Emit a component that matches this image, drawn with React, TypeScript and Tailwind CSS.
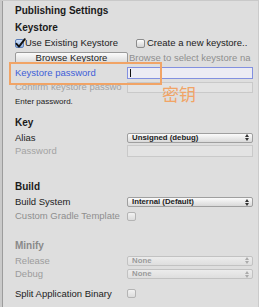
import React from "react";

const F = { fontFamily: '"Liberation Sans", Arial, sans-serif' };

function Check({ checked = false, disabled = false }: { checked?: boolean; disabled?: boolean }) {
  return (
    <div
      className={`relative w-[9px] h-[9px] rounded-[2px] border ${
        disabled ? "border-[#b4b4b4] bg-gradient-to-b from-[#f2f2f2] to-[#dcdcdc]" : checked ? "border-[#5d7fb8] bg-gradient-to-b from-[#cfe0f7] to-[#8fb2e6]" : "border-[#8c8c8c] bg-gradient-to-b from-[#fdfdfd] to-[#d3d3d3]"
      }`}
    >
      {checked && (
        <svg className="absolute left-[-1px] top-[-2px]" width="11" height="11" viewBox="0 0 11 11">
          <path d="M1.5 5.8 L4 8.6 L9.8 1.2" fill="none" stroke="#111" strokeWidth="1.9" strokeLinecap="round" strokeLinejoin="round" />
        </svg>
      )}
    </div>
  );
}

function Arrows({ c }: { c: string }) {
  return (
    <svg width="4" height="7" viewBox="0 0 4 7">
      <path d="M0 3 L2 0 L4 3 Z" fill={c} />
      <path d="M0 4 L2 7 L4 4 Z" fill={c} />
    </svg>
  );
}

function Dropdown({ text, disabled = false }: { text: string; disabled?: boolean }) {
  return (
    <div
      className={`w-[126px] h-[10px] rounded-[2px] border flex items-center justify-between pl-[4px] pr-[3px] ${
        disabled ? "border-[#c2c2c2] bg-gradient-to-b from-[#ececec] to-[#dedede]" : "border-[#9f9f9f] bg-gradient-to-b from-[#fbfbfb] to-[#d9d9d9]"
      }`}
    >
      <span className={`text-[7.8px] leading-none font-bold ${disabled ? "text-[#9a9a9a]" : "text-[#222]"}`}>{text}</span>
      <Arrows c={disabled ? "#aaa" : "#333"} />
    </div>
  );
}

function Row({ h, children, className = "" }: { h: string; children: React.ReactNode; className?: string }) {
  return <div className={`flex items-center ${h} ${className}`}>{children}</div>;
}

function Label({ children, color = "text-[#1c1c1c]" }: { children: React.ReactNode; color?: string }) {
  return <div className={`w-[112px] shrink-0 whitespace-nowrap text-[9.5px] leading-none ${color}`}>{children}</div>;
}

export default function App() {
  return (
    <div className="relative w-[259px] h-[307px] overflow-hidden bg-[#dedede]" style={F}>
      <div className="h-full border-l-2 border-[#cacaca] border-t border-t-[#c9c9c9] border-r border-r-[#cbcbcb]">
        <div className="h-full border-l border-[#9c9c9c] pl-[12px] pt-[3px] flex flex-col">
          <Row h="h-[14px]">
            <span className="text-[10px] font-bold leading-none text-[#1a1a1a]">Publishing Settings</span>
          </Row>
          <Row h="h-[14px]" className="mt-[3px]">
            <span className="text-[10px] font-bold leading-none text-[#1a1a1a]">Keystore</span>
          </Row>
          <Row h="h-[14px]" className="mt-[1px]">
            <div className="w-[121px] flex items-center gap-[1px]">
              <Check checked />
              <span className="text-[9.5px] leading-none text-[#1c1c1c] whitespace-nowrap">Use Existing Keystore</span>
            </div>
            <div className="flex items-center gap-[2px]">
              <Check />
              <span className="text-[9.5px] leading-none text-[#1c1c1c] whitespace-nowrap">Create a new keystore..</span>
            </div>
          </Row>
          <Row h="h-[12px]" className="mt-[2px]">
            <div className="w-[113px] h-[12px] shrink-0 rounded-[2px] border border-[#9a9a9a] bg-gradient-to-b from-[#fbfbfb] to-[#dadada] flex items-center justify-center">
              <span className="text-[9.5px] leading-none text-[#1c1c1c]">Browse Keystore</span>
            </div>
            <span className="ml-[1px] text-[9.5px] leading-none text-[#8e8e8e] whitespace-nowrap">Browse to select keystore na</span>
          </Row>
          <Row h="h-[14px]" className="mt-[2px]">
            <Label color="text-[#3f5fd8]">Keystore password</Label>
            <div className="w-[126px] h-[12px] border border-[#8290e0] bg-[#ececf4] flex items-center pl-[2px]">
              <div className="w-px h-[8px] bg-[#111]" />
            </div>
          </Row>
          <Row h="h-[14px]">
            <Label color="text-[#a3a3a3]">Confirm keystore passwo</Label>
            <div className="w-[126px] h-[11px] border border-[#c9c9c9] bg-[#e3e3e3]" />
          </Row>
          <Row h="h-[13px]" className="mt-[1px]">
            <span className="text-[8px] leading-none text-[#1c1c1c]">Enter password.</span>
          </Row>
          <Row h="h-[14px]" className="mt-[8px]">
            <span className="text-[10px] font-bold leading-none text-[#1a1a1a]">Key</span>
          </Row>
          <Row h="h-[13px]" className="mt-[1px]">
            <Label>Alias</Label>
            <Dropdown text="Unsigned (debug)" />
          </Row>
          <Row h="h-[14px]">
            <Label color="text-[#a3a3a3]">Password</Label>
            <div className="w-[126px] h-[12px] border border-[#c9c9c9] bg-[#e3e3e3]" />
          </Row>
          <Row h="h-[14px]" className="mt-[22px]">
            <span className="text-[10px] font-bold leading-none text-[#1a1a1a]">Build</span>
          </Row>
          <Row h="h-[14px]" className="mt-[1px]">
            <Label>Build System</Label>
            <Dropdown text="Internal (Default)" />
          </Row>
          <Row h="h-[14px]">
            <Label color="text-[#8e8e8e]">Custom Gradle Template</Label>
            <Check disabled />
          </Row>
          <Row h="h-[14px]" className="mt-[16px]">
            <span className="text-[10px] font-bold leading-none text-[#8a8a8a]">Minify</span>
          </Row>
          <Row h="h-[13px]" className="mt-[1px]">
            <Label color="text-[#9c9c9c]">Release</Label>
            <Dropdown text="None" disabled />
          </Row>
          <Row h="h-[14px]">
            <Label color="text-[#9c9c9c]">Debug</Label>
            <Dropdown text="None" disabled />
          </Row>
          <Row h="h-[13px]" className="mt-[6px]">
            <Label>Split Application Binary</Label>
            <Check disabled />
          </Row>
        </div>
      </div>
      <div className="absolute left-[9px] top-[62px] w-[153px] h-[23px] border-2 border-[#f1a466]" />
      <div
        className="absolute left-[162px] top-[85px] text-[17px] leading-none text-[#f1a466]"
        style={{ fontFamily: '"Noto Sans CJK SC", sans-serif' }}
      >
        密钥
      </div>
    </div>
  );
}
